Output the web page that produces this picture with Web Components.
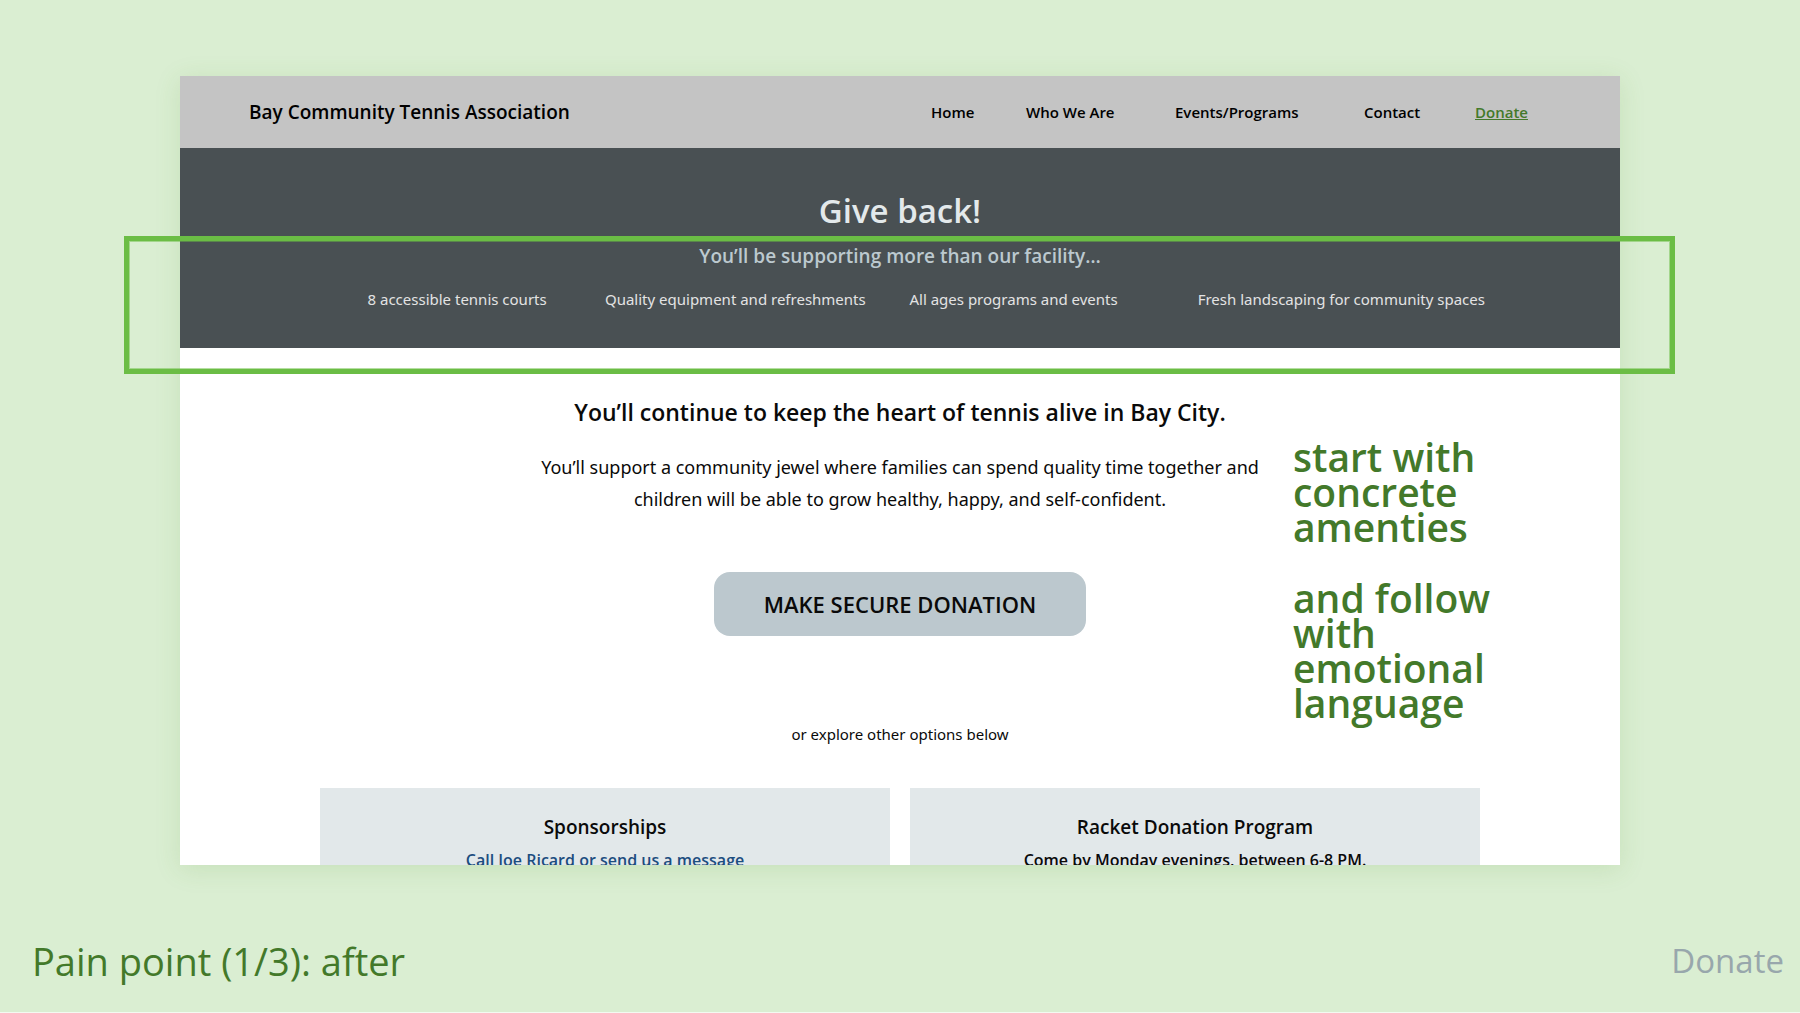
<!DOCTYPE html>
<html lang="en">
<head>
<meta charset="utf-8">
<title>Pain point (1/3): after</title>
<style>
  body {
    --heading: "Open Sans", sans-serif;
    --body: "Noto Sans", sans-serif;
    --green: #43792a;
    margin: 0;
    background: #daeed2;
    font-family: var(--body);
    color: #0a0a0a;
  }
</style>
</head>
<body>
<case-slide>
  <site-preview>
    <site-header></site-header>
    <site-hero></site-hero>
    <donate-pitch></donate-pitch>
    <option-cards>
      <option-card heading="Sponsorships"><a href="#message">Call Joe Ricard or send us a message</a></option-card>
      <option-card heading="Racket Donation Program">Come by Monday evenings, between 6-8 PM.</option-card>
    </option-cards>
    <side-note slot="note"></side-note>
  </site-preview>
  <slide-caption slot="caption" section="Donate">Pain point (1/3): after</slide-caption>
</case-slide>

<script>
const define = (name, html) => customElements.define(name, class extends HTMLElement {
  constructor() {
    super();
    const tpl = document.createElement('template');
    tpl.innerHTML = html;
    this.attachShadow({ mode: 'open' }).append(tpl.content.cloneNode(true));
  }
  connectedCallback() {
    for (const el of this.shadowRoot.querySelectorAll('[data-attr]')) {
      el.textContent = this.getAttribute(el.dataset.attr);
    }
  }
});

define('case-slide', `
  <style>
    :host { display: flex; flex-direction: column; position: relative; height: 100vh; box-sizing: border-box; padding-top: 76px; overflow: hidden; }
    .highlight { position: absolute; top: 236px; left: 124px; right: 125px; height: 138px; box-sizing: border-box;
      border: 5px solid #6bbd45; box-shadow: inset 0 0 0 1px rgba(107,189,69,.5); pointer-events: none; }
  </style>
  <slot></slot>
  <slot name="caption"></slot>
  <div class="highlight"></div>`);

define('site-preview', `
  <style>
    :host { display: block; position: relative; flex: 1; min-height: 0; margin: 0 10%; background: #fff;
      box-shadow: 0 4px 24px rgba(84,150,50,.15); }
    .clip { height: 100%; overflow: hidden; }
  </style>
  <div class="clip"><slot></slot></div>
  <slot name="note"></slot>`);

define('site-header', `
  <style>
    :host { display: flex; align-items: center; justify-content: space-between; height: 72px; padding: 0 91px 0 69px;
      background: #c4c4c4; color: #000; font-family: var(--heading); font-weight: 600; }
    .brand { font-size: 19px; line-height: 28px; }
    nav { display: grid; grid-template-columns: 95px 149px 189px 111px 54px; font-size: 15px; line-height: 24px; }
    a { color: inherit; text-decoration: none; white-space: nowrap; }
    a[aria-current] { color: var(--green); text-decoration: underline; text-decoration-thickness: 1px; }
  </style>
  <div class="brand">Bay Community Tennis Association</div>
  <nav>
    <a href="#home">Home</a><a href="#about">Who We Are</a><a href="#events">Events/Programs</a>
    <a href="#contact">Contact</a><a href="#donate" aria-current="page">Donate</a>
  </nav>`);

define('site-hero', `
  <style>
    :host { display: block; padding: 43px 0 37px; background: #495053; text-align: center; }
    h1, p, ul { margin: 0; }
    h1 { font: 600 33px/40px var(--heading); color: #e3e9eb; }
    p { margin-top: 11px; font: 600 19px/28px var(--heading); color: #bcc9cf; }
    ul { display: grid; grid-template-columns: 278fr 278fr 278fr 377fr; margin-top: 17px; padding: 0 90px 0 138px;
      list-style: none; font-size: 15px; line-height: 24px; color: #e3e3e3; white-space: nowrap; }
  </style>
  <h1>Give back!</h1>
  <p>You’ll be supporting more than our facility…</p>
  <ul>
    <li>8 accessible tennis courts</li>
    <li>Quality equipment and refreshments</li>
    <li>All ages programs and events</li>
    <li>Fresh landscaping for community spaces</li>
  </ul>`);

define('donate-pitch', `
  <style>
    :host { display: flex; flex-direction: column; align-items: center; padding-top: 48px; text-align: center; }
    h2, p { margin: 0; }
    h2 { font: 600 23px/32px var(--heading); }
    .lead { max-width: 760px; margin-top: 23px; font-size: 18px; line-height: 32px; }
    button { width: 372px; height: 64px; margin-top: 57px; padding: 0; border: 0; border-radius: 16px;
      background: #bcc8ce; color: #0a0a0a; font: 600 22px/32px var(--heading); cursor: pointer; }
    .more { margin-top: 86px; font-size: 15px; line-height: 24px; }
  </style>
  <h2>You’ll continue to keep the heart of tennis alive in Bay City.</h2>
  <p class="lead">You’ll support a community jewel where families can spend quality time together and children will be able to grow healthy, happy, and self-confident.</p>
  <button type="button">MAKE SECURE DONATION</button>
  <p class="more">or explore other options below</p>`);

define('option-cards', `
  <style>
    :host { display: grid; grid-template-columns: 1fr 1fr; gap: 20px; padding: 42px 140px 0; }
  </style>
  <slot></slot>`);

define('option-card', `
  <style>
    :host { display: block; padding: 25px 24px 40px; background: #e2e8ea; text-align: center;
      font: 600 16px/24px var(--heading); }
    h3 { margin: 0 0 7px; font-size: 19px; line-height: 28px; font-weight: 600; }
    ::slotted(a) { color: #1c4d7f; text-decoration: none; }
  </style>
  <h3 data-attr="heading"></h3>
  <slot></slot>`);

define('side-note', `
  <style>
    :host { display: block; position: absolute; top: 363px; left: 1113px; width: 220px;
      font: 600 39px/35px var(--heading); color: var(--green); }
    p { margin: 0 0 36px; }
  </style>
  <p>start with concrete amenties</p>
  <p>and follow with emotional language</p>`);

define('slide-caption', `
  <style>
    :host { display: flex; align-items: center; justify-content: space-between; padding: 56px 16px 11px 32px;
      border-bottom: 1px solid #f3faf1; font: 400 38px/80px var(--heading); color: var(--green); }
    .section { font-size: 33px; color: #98a7ac; }
  </style>
  <div><slot></slot></div>
  <div class="section" data-attr="section"></div>`);
</script>
</body>
</html>
